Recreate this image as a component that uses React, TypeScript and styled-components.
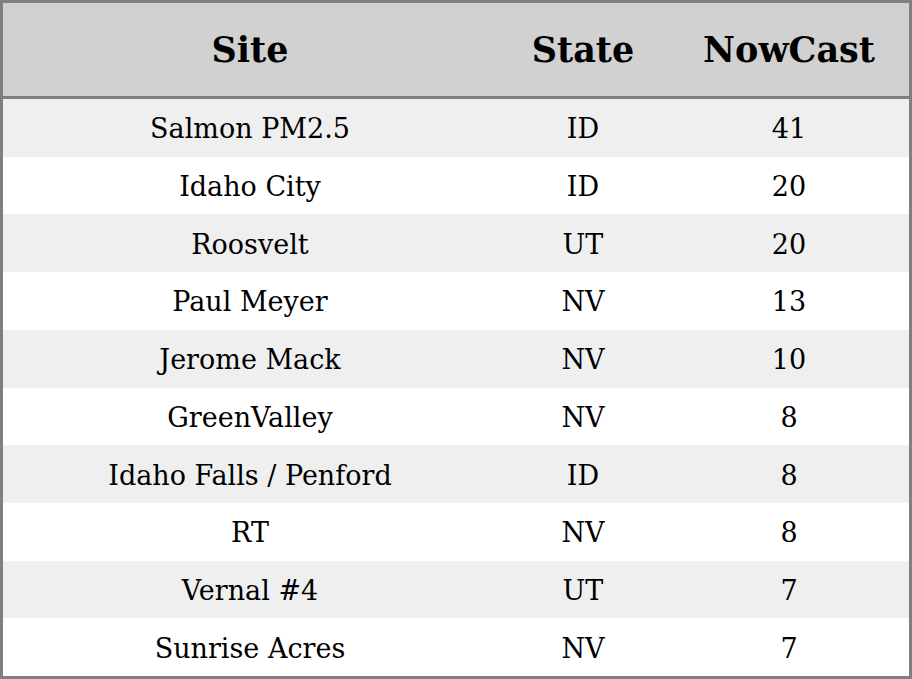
import React from "react";
import styled, { createGlobalStyle } from "styled-components";

const Global = createGlobalStyle`
  html, body { margin: 0; padding: 0; background: #ffffff; }
  body { font-family: "DejaVu Serif", serif; }
`;

const Table = styled.div`
  box-sizing: border-box;
  width: 912px;
  height: 679px;
  border: 3px solid #808080;
  display: flex;
  flex-direction: column;
  color: #000;
  font-family: "DejaVu Serif", serif;
`;

const Cols = "494px 172px 1fr";

const Header = styled.div`
  display: grid;
  grid-template-columns: ${Cols};
  height: 93px;
  flex: none;
  background: #d1d1d1;
  border-bottom: 3px solid #808080;
`;

const HeadCell = styled.div`
  display: flex;
  align-items: center;
  justify-content: center;
  font-weight: bold;
  font-size: 35px;
`;

const Row = styled.div<{ $odd: boolean }>`
  display: grid;
  grid-template-columns: ${Cols};
  flex: 1;
  background: ${(p) => (p.$odd ? "#efefef" : "#ffffff")};
`;

const Cell = styled.div`
  display: flex;
  align-items: center;
  justify-content: center;
  padding-top: 2px;
  font-size: 27px;
`;

const data: [string, string, number][] = [
  ["Salmon PM2.5", "ID", 41],
  ["Idaho City", "ID", 20],
  ["Roosvelt", "UT", 20],
  ["Paul Meyer", "NV", 13],
  ["Jerome Mack", "NV", 10],
  ["GreenValley", "NV", 8],
  ["Idaho Falls / Penford", "ID", 8],
  ["RT", "NV", 8],
  ["Vernal #4", "UT", 7],
  ["Sunrise Acres", "NV", 7],
];

export default function App() {
  return (
    <>
      <Global />
      <Table>
        <Header>
          <HeadCell>Site</HeadCell>
          <HeadCell>State</HeadCell>
          <HeadCell>NowCast</HeadCell>
        </Header>
        {data.map(([site, st, v], i) => (
          <Row key={i} $odd={i % 2 === 0}>
            <Cell>{site}</Cell>
            <Cell>{st}</Cell>
            <Cell>{v}</Cell>
          </Row>
        ))}
      </Table>
    </>
  );
}
